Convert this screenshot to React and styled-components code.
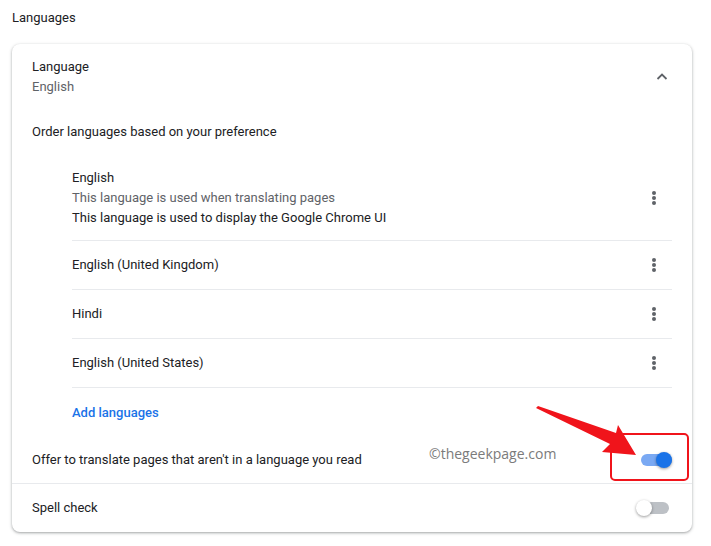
import React from "react";
import styled, { createGlobalStyle } from "styled-components";

const GlobalStyle = createGlobalStyle`
  body {
    margin: 0;
    background: #ffffff;
    font-family: Roboto, "Liberation Sans", sans-serif;
    font-size: 13px;
    color: #202124;
  }
`;

const Page = styled.div`
  position: relative;
  width: 711px;
  height: 546px;
  padding: 8px 19px 0 12px;
  box-sizing: border-box;
`;

const Title = styled.h2`
  margin: 0 0 16px;
  font-size: 13px;
  font-weight: 400;
  line-height: 20px;
  color: #202124;
`;

const Card = styled.div`
  background: #fff;
  border-radius: 8px;
  box-shadow: 0 1px 2px rgba(60, 64, 67, 0.3), 0 1px 3px 1px rgba(60, 64, 67, 0.15);
  overflow: hidden;
`;

const Header = styled.div`
  display: flex;
  align-items: center;
  justify-content: space-between;
  padding: 13px 20px 25px;
`;

const Line = styled.div`
  line-height: 20px;
  color: ${(p) => (p.$muted ? "#5f6368" : "#202124")};
`;

const SubHead = styled.div`
  padding: 0 20px;
  line-height: 20px;
`;

const List = styled.div`
  margin-top: 13px;
  padding: 0 20px 0 60px;
`;

const Item = styled.div`
  display: flex;
  align-items: center;
  justify-content: space-between;
  min-height: 48px;
  padding: ${(p) => (p.$tall ? "13px 0 12px" : "0")};
  box-sizing: content-box;
  border-bottom: 1px solid #e8eaed;
`;

const MoreButton = styled.div`
  width: 36px;
  height: 36px;
  display: flex;
  flex-direction: column;
  align-items: center;
  justify-content: center;
  gap: 1px;
  span {
    width: 4px;
    height: 4px;
    border-radius: 50%;
    background: #5f6368;
  }
`;

const AddLink = styled.div`
  height: 48px;
  display: flex;
  align-items: center;
  color: #1a73e8;
  font-weight: 500;
`;

const Row = styled.div`
  display: flex;
  align-items: center;
  justify-content: space-between;
  height: ${(p) => p.$h}px;
  padding: 0 20px;
  border-bottom: ${(p) => (p.$divider ? "1px solid #e8eaed" : "none")};
`;

const Toggle = styled.div`
  position: relative;
  width: 36px;
  height: 16px;
  &::before {
    content: "";
    position: absolute;
    left: 5px;
    right: ${(p) => (p.$on ? "0" : "3px")};
    top: 2px;
    height: 12px;
    border-radius: 6px;
    background: ${(p) => (p.$on ? "#7aa9f3" : "#bdc1c6")};
  }
  &::after {
    content: "";
    position: absolute;
    top: 0;
    ${(p) => (p.$on ? "right: 0;" : "left: 0;")}
    width: 16px;
    height: 16px;
    border-radius: 50%;
    background: ${(p) => (p.$on ? "#1a73e8" : "#ffffff")};
    box-shadow: 0 1px 3px rgba(0, 0, 0, 0.4);
  }
`;

const Watermark = styled.div`
  position: absolute;
  left: 429px;
  top: 444px;
  font-family: "Open Sans", sans-serif;
  font-size: 14px;
  line-height: 20px;
  color: #7b7b7b;
`;

const Highlight = styled.div`
  position: absolute;
  left: 610px;
  top: 433px;
  width: 79px;
  height: 48px;
  box-sizing: border-box;
  border: 2px solid #f0141b;
  border-radius: 5px;
`;

const Arrow = styled.svg`
  position: absolute;
  left: 530px;
  top: 400px;
`;

const Chevron = () => (
  <svg width="20" height="20" viewBox="0 0 20 20">
    <path d="M5.5 12 L10 7.5 L14.5 12" fill="none" stroke="#5f6368" strokeWidth="1.8" />
  </svg>
);

const More = () => (
  <MoreButton>
    <span />
    <span />
    <span />
  </MoreButton>
);

const languages = ["English (United Kingdom)", "Hindi", "English (United States)"];

export default function App() {
  return (
    <Page>
      <GlobalStyle />
      <Title>Languages</Title>
      <Card>
        <Header>
          <div>
            <Line>Language</Line>
            <Line $muted>English</Line>
          </div>
          <Chevron />
        </Header>
        <SubHead>Order languages based on your preference</SubHead>
        <List>
          <Item $tall>
            <div>
              <Line>English</Line>
              <Line $muted>This language is used when translating pages</Line>
              <Line>This language is used to display the Google Chrome UI</Line>
            </div>
            <More />
          </Item>
          {languages.map((l) => (
            <Item key={l}>
              <Line>{l}</Line>
              <More />
            </Item>
          ))}
          <AddLink>Add languages</AddLink>
        </List>
        <Row $h={47} $divider>
          <Line>Offer to translate pages that aren't in a language you read</Line>
          <Toggle $on />
        </Row>
        <Row $h={48}>
          <Line>Spell check</Line>
          <Toggle />
        </Row>
      </Card>
      <Watermark>©thegeekpage.com</Watermark>
      <Highlight />
      <Arrow width="110" height="62" viewBox="0 0 110 62">
        <polygon points="8,6 86,33 88,25 106,55 72,52 80,44 6,8" fill="#f0141b" />
      </Arrow>
    </Page>
  );
}
